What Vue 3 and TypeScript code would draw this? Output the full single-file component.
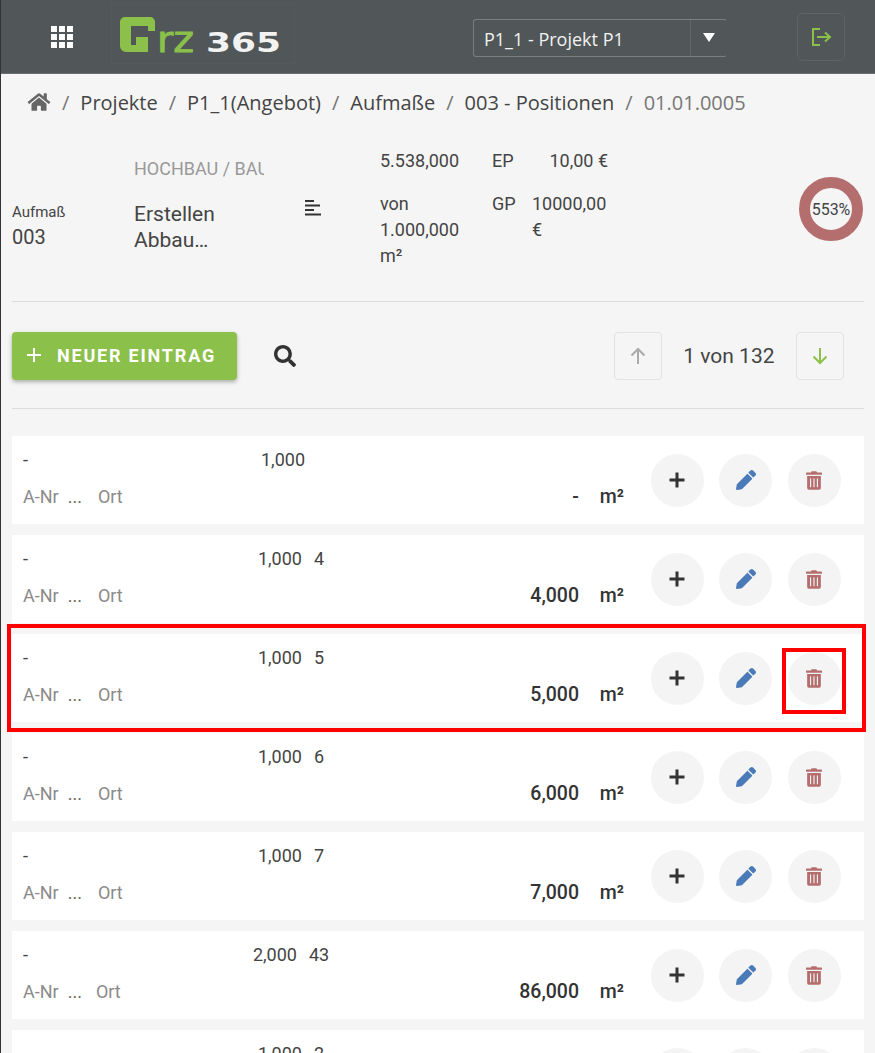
<script setup lang="ts">
interface Row {
  qty: string
  count: string
  value: string
}

const rows: Row[] = [
  { qty: "1,000", count: "", value: "-" },
  { qty: "1,000", count: "4", value: "4,000" },
  { qty: "1,000", count: "5", value: "5,000" },
  { qty: "1,000", count: "6", value: "6,000" },
  { qty: "1,000", count: "7", value: "7,000" },
  { qty: "2,000", count: "43", value: "86,000" },
  { qty: "1,000", count: "2", value: "2,000" },
]

const crumbs = ["Projekte", "P1_1(Angebot)", "Aufmaße", "003 - Positionen"]
</script>

<template>
  <div class="page">
    <header class="topbar">
      <button type="button" class="apps" aria-label="Apps">
        <svg width="24" height="24" viewBox="0 0 24 24" fill="#fff">
          <template v-for="y in [1, 9, 17]" :key="y">
            <rect v-for="x in [1, 9, 17]" :key="x" :x="x" :y="y" width="6" height="6" />
          </template>
        </svg>
      </button>
      <svg class="logo" width="184" height="60" viewBox="0 0 184 60">
        <path fill="#8bc04a" d="M14 13H39a5 5 0 0 1 5 5V27H37V22H20V41H25V33H37V48H15a6 6 0 0 1-6-6V18a5 5 0 0 1 5-5z" />
        <text class="logo-rz" x="46" y="48" textLength="37" lengthAdjust="spacingAndGlyphs">rz</text>
        <text class="logo-num" x="95" y="48" textLength="75" lengthAdjust="spacingAndGlyphs">365</text>
      </svg>
      <div class="project-select">
        <span class="project-name">P1_1 - Projekt P1</span>
        <span class="project-caret"></span>
      </div>
      <button type="button" class="logout" aria-label="Abmelden">
        <svg width="22" height="22" viewBox="0 0 22 22" fill="none" stroke="#8bc04a" stroke-width="2">
          <path d="M10 3H3v16h7" />
          <path d="M7 11h13M15 6.500l5 4.500-5 4.500" />
        </svg>
      </button>
    </header>

    <nav class="crumbs">
      <svg class="home" width="24" height="20" viewBox="0 0 576 512" fill="#666">
        <path d="M280.400 148.300 96 300.100V464a16 16 0 0 0 16 16l112-.300a16 16 0 0 0 15.900-16V368a16 16 0 0 1 16-16h64a16 16 0 0 1 16 16v95.600a16 16 0 0 0 16 16.100L464 480a16 16 0 0 0 16-16V300L295.700 148.300a12.200 12.200 0 0 0-15.300 0zM571.600 251.500 488 182.600V44.100a12 12 0 0 0-12-12h-56a12 12 0 0 0-12 12v72.600L318.500 43a48 48 0 0 0-61 0L4.300 251.500a12 12 0 0 0-1.600 16.900l25.500 31A12 12 0 0 0 45.200 301l235.200-193.700a12.200 12.200 0 0 1 15.300 0L530.900 301a12 12 0 0 0 16.900-1.600l25.500-31a12 12 0 0 0-1.700-16.900z" />
      </svg>
      <template v-for="c in crumbs" :key="c">
        <span class="sep">/</span>
        <span class="crumb">{{ c }}</span>
      </template>
      <span class="sep">/</span>
      <span class="crumb current">01.01.0005</span>
    </nav>

    <section class="summary">
      <div class="sum-id">
        <div class="sum-label">Aufmaß</div>
        <div class="sum-no">003</div>
      </div>
      <div class="sum-title">
        <div class="sum-path">HOCHBAU / BAUSTELLE</div>
        <div class="sum-name">Erstellen<br />Abbau…</div>
      </div>
      <svg class="sum-lines" width="17" height="16" viewBox="0 0 17 16" fill="#333">
        <rect x="0" y="0" width="9" height="2" />
        <rect x="0" y="4.500" width="15" height="2" />
        <rect x="0" y="9" width="9" height="2" />
        <rect x="0" y="13.500" width="16" height="2" />
      </svg>
      <div class="sum-qty">
        <div class="qty-main">5.538,000</div>
        <div class="qty-sub">von 1.000,000 m²</div>
      </div>
      <div class="sum-price">
        <span class="price-key">EP</span>
        <span class="price-val">10,00 €</span>
        <span class="price-key">GP</span>
        <span class="price-val wrap">10000,00 €</span>
      </div>
      <div class="donut">553%</div>
    </section>

    <div class="toolbar">
      <button type="button" class="new-entry">
        <svg width="16" height="16" viewBox="0 0 16 16" stroke="#fff" stroke-width="2">
          <path d="M8 1v14M1 8h14" />
        </svg>
        <span>Neuer Eintrag</span>
      </button>
      <svg class="search" width="22" height="22" viewBox="0 0 512 512" fill="#333">
        <path d="M505 442.700 405.300 343c-4.500-4.500-10.600-7-17-7H372c27.600-35.300 44-79.700 44-128C416 93.100 322.900 0 208 0S0 93.100 0 208s93.100 208 208 208c48.300 0 92.700-16.400 128-44v16.300c0 6.400 2.500 12.500 7 17l99.700 99.700c9.400 9.400 24.600 9.400 33.900 0l28.300-28.300c9.400-9.400 9.400-24.600.1-34zM208 336c-70.700 0-128-57.200-128-128 0-70.700 57.200-128 128-128 70.700 0 128 57.200 128 128 0 70.700-57.200 128-128 128z" />
      </svg>
      <div class="pager">
        <button type="button" class="page-btn" aria-label="Zurück">
          <svg width="18" height="18" viewBox="0 0 18 18" fill="none" stroke="#aaa" stroke-width="2">
            <path d="M9 17V2M2.500 8.500 9 2l6.500 6.500" />
          </svg>
        </button>
        <span class="page-text">1 von 132</span>
        <button type="button" class="page-btn" aria-label="Weiter">
          <svg width="18" height="18" viewBox="0 0 18 18" fill="none" stroke="#8bc04a" stroke-width="2">
            <path d="M9 1v15M2.500 9.500 9 16l6.500-6.500" />
          </svg>
        </button>
      </div>
    </div>

    <ul class="list">
      <li v-for="(r, i) in rows" :key="i" class="row" :class="{ wide: r.value.length > 5 }">
        <div class="row-main">
          <div class="row-top">
            <span class="dash">-</span>
            <span class="row-qty">{{ r.qty }}<i class="row-count">{{ r.count }}</i></span>
          </div>
          <div class="row-bottom">
            <span class="anr">A-Nr</span>
            <span class="dots">...</span>
            <span class="ort">Ort</span>
            <span class="row-value">{{ r.value }}</span>
            <span class="row-unit">m²</span>
          </div>
        </div>
        <div class="row-actions">
          <button type="button" class="circle" aria-label="Hinzufügen">
            <svg width="18" height="18" viewBox="0 0 18 18" stroke="#333" stroke-width="3">
              <path d="M9 1.500v15M1.500 9h15" />
            </svg>
          </button>
          <button type="button" class="circle" aria-label="Bearbeiten">
            <svg width="20" height="20" viewBox="0 0 512 512" fill="#4a7ab8">
              <path d="M497.900 142.100l-46.100 46.100c-4.700 4.700-12.300 4.700-17 0l-111-111c-4.700-4.700-4.700-12.300 0-17l46.100-46.100c18.700-18.700 49.100-18.700 67.900 0l60.100 60.100c18.800 18.700 18.800 49.100 0 67.900zM284.200 99.800L21.600 362.400.4 483.900c-2.900 16.400 11.400 30.600 27.800 27.800l121.500-21.300 262.600-262.600c4.700-4.700 4.700-12.300 0-17l-111-111c-4.800-4.700-12.400-4.700-17.100 0z" />
            </svg>
          </button>
          <button type="button" class="circle" aria-label="Löschen">
            <svg width="16" height="19" viewBox="0 0 448 512" fill="#b56e6e">
              <path d="M32 464a48 48 0 0 0 48 48h288a48 48 0 0 0 48-48V128H32zm272-256a16 16 0 0 1 32 0v224a16 16 0 0 1-32 0zm-96 0a16 16 0 0 1 32 0v224a16 16 0 0 1-32 0zm-96 0a16 16 0 0 1 32 0v224a16 16 0 0 1-32 0zM432 32H312l-9.400-18.700A24 24 0 0 0 281.100 0H166.800a23.700 23.700 0 0 0-21.400 13.300L136 32H16A16 16 0 0 0 0 48v32a16 16 0 0 0 16 16h416a16 16 0 0 0 16-16V48a16 16 0 0 0-16-16z" />
            </svg>
          </button>
        </div>
      </li>
    </ul>

    <div class="mark mark-row"></div>
    <div class="mark mark-btn"></div>
  </div>
</template>

<style>
html,
body {
  margin: 0;
  background: #f5f5f5;
}
</style>

<style scoped>
.page {
  position: relative;
  height: 1053px;
  overflow: hidden;
  background: #f5f5f5;
  font-family: Roboto, sans-serif;
  color: #444;
  border-left: 1px solid #333;
  box-sizing: border-box;
}

button {
  border: 0;
  padding: 0;
  background: none;
  font: inherit;
}

.topbar {
  height: 74px;
  background: #515659;
  display: flex;
  align-items: flex-start;
  box-sizing: border-box;
  border-bottom: 1px solid #6a6e70;
  font-family: "Open Sans", sans-serif;
}

.apps {
  width: 24px;
  height: 24px;
  margin: 25px 0 0 49px;
}

.logo {
  flex: none;
  margin: 4px 0 0 37px;
  outline: 1px solid #55595c;
  outline-offset: -1px;
  font-family: "DejaVu Sans", sans-serif;
}

.logo-rz {
  fill: #8bc04a;
  stroke: #8bc04a;
  stroke-width: 0.8px;
  font-size: 35px;
}

.logo-num {
  fill: #f2f2f2;
  font-size: 26px;
  font-weight: 700;
}

.project-select {
  width: 254px;
  height: 38px;
  margin: 19px 0 0 178px;
  box-sizing: border-box;
  border: 1px solid #7a7e80;
  border-right-color: transparent;
  border-radius: 3px;
  display: flex;
  align-items: center;
  color: #f2f2f2;
  font-size: 18px;
}

.project-name {
  flex: 1;
  padding: 2px 0 0 10px;
}

.project-caret {
  width: 36px;
  height: 36px;
  box-sizing: border-box;
  border-left: 1px solid #62666a;
  position: relative;
}

.project-caret::after {
  content: "";
  position: absolute;
  left: 12px;
  top: 13px;
  border-left: 6px solid transparent;
  border-right: 6px solid transparent;
  border-top: 9px solid #fff;
}

.logout {
  width: 48px;
  height: 48px;
  margin: 13px 0 0 70px;
  border: 1px solid #5f6366;
  border-radius: 6px;
  display: flex;
  align-items: center;
  justify-content: center;
}

.crumbs {
  height: 59px;
  box-sizing: border-box;
  padding: 0 0 2px 26px;
  display: flex;
  align-items: center;
  font-family: "Open Sans", sans-serif;
  font-size: 20px;
  color: #444;
}

.crumbs .home {
  margin-top: -1px;
}

.sep {
  margin: 0 11px;
  color: #777;
}

.current {
  color: #777;
}

.summary {
  height: 168px;
  margin: 0 11px;
  border-bottom: 1px solid #ddd;
  position: relative;
  display: flex;
}

.sum-id {
  width: 122px;
  flex: none;
  padding-top: 70px;
}

.sum-label {
  font-size: 15px;
  line-height: 18px;
}

.sum-no {
  font-size: 20px;
  line-height: 32px;
}

.sum-title {
  width: 130px;
  flex: none;
  overflow: hidden;
  padding-top: 24px;
}

.sum-path {
  font-size: 18px;
  line-height: 24px;
  color: #999;
  white-space: nowrap;
}

.sum-name {
  font-size: 21px;
  line-height: 26px;
  margin-top: 20px;
}

.sum-lines {
  flex: none;
  margin: 67px 0 0 41px;
}

.sum-qty {
  width: 90px;
  flex: none;
  margin-left: 58px;
  padding-top: 15px;
  font-size: 18px;
  line-height: 26px;
}

.qty-sub {
  margin-top: 17px;
}

.sum-price {
  width: 116px;
  flex: none;
  margin-left: 22px;
  padding-top: 15px;
  display: grid;
  grid-template-columns: 40px 76px;
  row-gap: 17px;
  align-content: start;
  font-size: 18px;
  line-height: 26px;
}

.price-val {
  text-align: right;
}

.price-val.wrap {
  text-align: left;
}

.donut {
  position: absolute;
  right: 1px;
  top: 44px;
  width: 64px;
  height: 64px;
  box-sizing: border-box;
  border: 11px solid #b56e6e;
  border-radius: 50%;
  display: flex;
  align-items: center;
  justify-content: center;
  font-size: 16px;
  white-space: nowrap;
}

.toolbar {
  height: 107px;
  margin: 0 11px;
  border-bottom: 1px solid #ddd;
  display: flex;
  align-items: flex-start;
  box-sizing: border-box;
}

.new-entry {
  width: 225px;
  height: 48px;
  margin-top: 30px;
  background: #8bc04a;
  border-radius: 4px;
  box-shadow: 0 2px 4px rgba(0, 0, 0, 0.3);
  color: #fff;
  display: flex;
  align-items: center;
  padding: 0 0 2px 14px;
  box-sizing: border-box;
  gap: 15px;
  font-size: 18px;
  font-weight: 700;
  letter-spacing: 1.800px;
  text-transform: uppercase;
}

.search {
  margin: 43px 0 0 37px;
}

.pager {
  margin: 30px 20px 0 auto;
  display: flex;
  align-items: center;
}

.page-btn {
  width: 48px;
  height: 48px;
  border: 1px solid #e2e2e2;
  border-radius: 4px;
  display: flex;
  align-items: center;
  justify-content: center;
}

.page-text {
  font-size: 21px;
  margin: 0 21.500px;
}

.list {
  list-style: none;
  margin: 27px 11px 0;
  padding: 0;
  display: flex;
  flex-direction: column;
  gap: 11px;
}

.row {
  height: 88px;
  flex: none;
  background: #fff;
  display: flex;
}

.row-main {
  width: 613px;
  flex: none;
  padding-left: 11px;
  box-sizing: border-box;
}

.row-top {
  height: 24px;
  margin-top: 12px;
  display: flex;
  font-size: 18px;
  line-height: 24px;
}

.dash {
  width: 210px;
}

.row-qty {
  width: 116px;
  text-align: center;
}

.row-count {
  font-style: normal;
  display: inline-block;
  min-width: 4px;
  margin-left: 12px;
}

.row-bottom {
  margin-top: 13px;
  display: flex;
  align-items: baseline;
  font-size: 18px;
  line-height: 24px;
}

.anr,
.ort {
  color: #8a8a8a;
}

.dots {
  margin: 0 16px 0 9px;
  color: #666;
}

.wide .dots {
  margin-right: 14px;
}

.row-value {
  margin-left: auto;
  color: #333;
  font-size: 19.500px;
  font-weight: 500;
}

.row-unit {
  width: 45px;
  text-align: right;
  padding-right: 1px;
  color: #333;
  font-size: 19.500px;
  font-weight: 500;
}

.row-actions {
  margin: 17.500px 0 0 25.500px;
  display: flex;
  gap: 15.500px;
  align-items: flex-start;
}

.circle {
  width: 53px;
  height: 53px;
  border-radius: 50%;
  background: #f4f4f4;
  display: flex;
  align-items: center;
  justify-content: center;
}

.mark {
  position: absolute;
  border: 4px solid #f00;
  box-sizing: border-box;
}

.mark-row {
  left: 6px;
  top: 624px;
  width: 859px;
  height: 108px;
}

.mark-btn {
  left: 781px;
  top: 648px;
  width: 64px;
  height: 66px;
}
</style>
